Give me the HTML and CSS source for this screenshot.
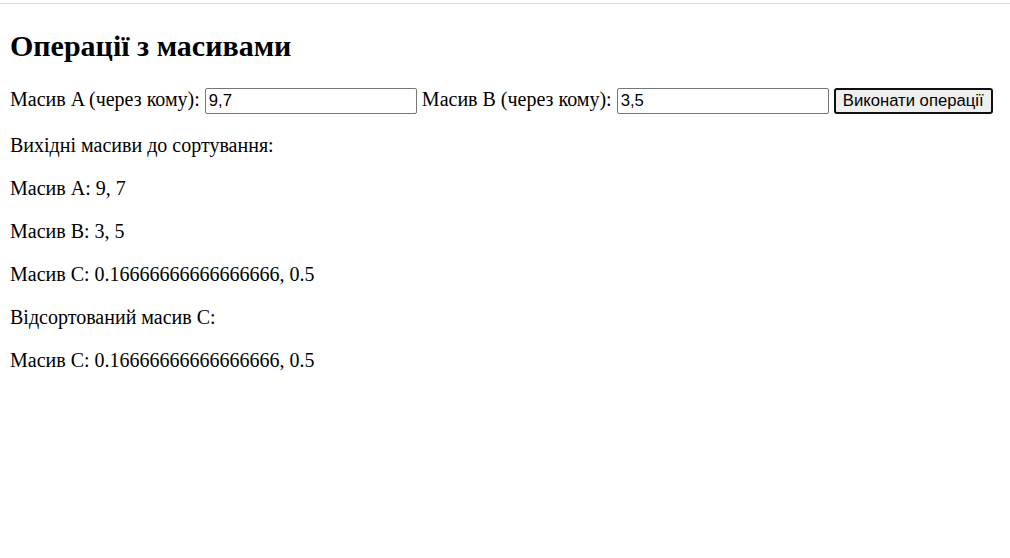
FILE: index.html
```html
<!DOCTYPE html>
<html lang="uk">
<head>
<meta charset="utf-8">
<title>Операції з масивами</title>
<link rel="stylesheet" href="styles.css">
</head>
<body>
<div class="topbar"></div>
<div class="page">
  <h2 class="title">Операції з масивами</h2>
  <div class="form">
    <label for="a">Масив A (через кому):</label> <input id="a" class="field" type="text" value="9,7">
    <label for="b">Масив B (через кому):</label> <input id="b" class="field" type="text" value="3,5">
    <button class="btn" type="button">Виконати операції</button>
  </div>
  <div class="output">
    <p class="line">Вихідні масиви до сортування:</p>
    <p class="line">Масив A: 9, 7</p>
    <p class="line">Масив B: 3, 5</p>
    <p class="line">Масив C: 0.16666666666666666, 0.5</p>
    <p class="line">Відсортований масив C:</p>
    <p class="line">Масив C: 0.16666666666666666, 0.5</p>
  </div>
</div>
</body>
</html>
```
FILE: styles.css
```css
html, body {
  margin: 0;
  padding: 0;
  background: #fff;
}
body {
  font-family: "Liberation Serif", "Times New Roman", serif;
  font-size: 20px;
  color: #000;
}
.topbar {
  height: 3px;
  border-bottom: 1px solid #dcdcdc;
}
.page {
  padding: 0 10px;
}
.title {
  font-size: 30px;
  font-weight: bold;
  margin: 25px 0;
}
.form {
  margin: 0;
}
.field {
  box-sizing: border-box;
  width: 212px;
  height: 26px;
  padding: 1px 3px;
  border: 1px solid #767676;
  border-radius: 2px;
  font-family: "Liberation Sans", Arial, sans-serif;
  font-size: 16.67px;
  color: #000;
  background: #fff;
  vertical-align: baseline;
}
.btn {
  box-sizing: border-box;
  width: 159px;
  height: 26px;
  padding: 0 4px;
  margin: 0;
  border: 2px solid #101010;
  border-radius: 3px;
  background: #efefef;
  font-family: "Liberation Sans", Arial, sans-serif;
  font-size: 16.67px;
  color: #000;
}
.line {
  margin: 20px 0;
}
```
